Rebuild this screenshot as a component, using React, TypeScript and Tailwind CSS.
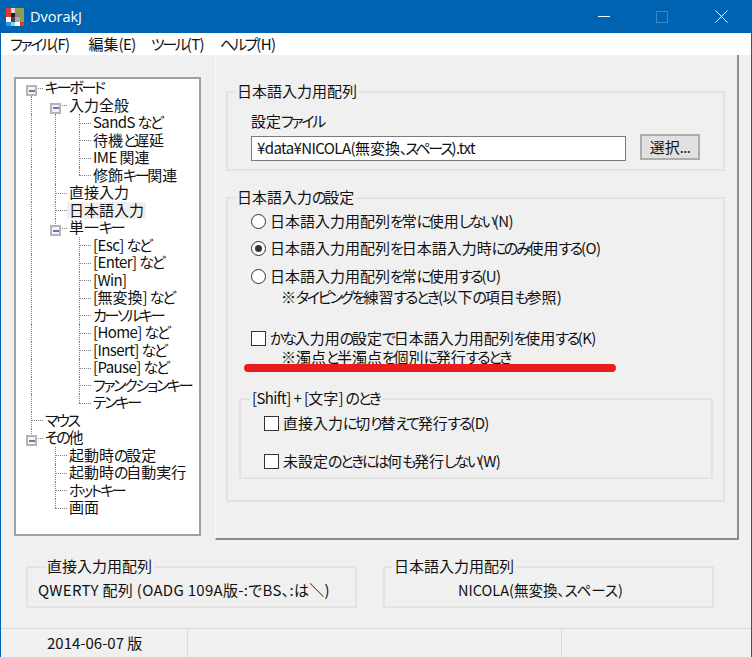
import React from 'react';

const treeRows: { label: string; guides: string; selected?: boolean }[] = [
  { label: 'キーボード', guides: 'D' },
  { label: '入力全般', guides: '|D' },
  { label: 'SandS など', guides: '||T' },
  { label: '待機と遅延', guides: '||T' },
  { label: 'IME 関連', guides: '||T' },
  { label: '修飾キー関連', guides: '||L' },
  { label: '直接入力', guides: '|T' },
  { label: '日本語入力', guides: '|T', selected: true },
  { label: '単一キー', guides: '|U' },
  { label: '[Esc] など', guides: '| T' },
  { label: '[Enter] など', guides: '| T' },
  { label: '[Win]', guides: '| T' },
  { label: '[無変換] など', guides: '| T' },
  { label: 'カーソルキー', guides: '| T' },
  { label: '[Home] など', guides: '| T' },
  { label: '[Insert] など', guides: '| T' },
  { label: '[Pause] など', guides: '| T' },
  { label: 'ファンクションキー', guides: '| T' },
  { label: 'テンキー', guides: '| L' },
  { label: 'マウス', guides: 'T' },
  { label: 'その他', guides: 'U' },
  { label: '起動時の設定', guides: ' T' },
  { label: '起動時の自動実行', guides: ' T' },
  { label: 'ホットキー', guides: ' T' },
  { label: '画面', guides: ' L' },
];

// kana and latin run narrower than kanji in the original UI font
const Jp = ({ text }: { text: string }) => (
  <>
    {text.split(/([ぁ-んァ-ヶー、]+|[\x20-\x7e¥]+)/).filter(Boolean).map((part, i) => {
      if (/^[ぁ-んァ-ヶー、]/.test(part)) return <span key={i} className="tracking-[-0.15em]">{part}</span>;
      if (/^[\x20-\x7e¥]/.test(part)) return <span key={i} className="tracking-[-0.04em]">{part}</span>;
      return <span key={i}>{part}</span>;
    })}
  </>
);

const GuideCell = ({ kind }: { kind: string }) => {
  const expander = kind === 'D' || kind === 'U';
  return (
    <div className="relative w-6 h-full shrink-0">
      {(kind === '|' || kind === 'T') && <span className="absolute left-3 top-0 bottom-0 border-l border-dotted border-[#808080]" />}
      {(kind === 'L' || kind === 'U') && <span className="absolute left-3 top-0 h-1/2 border-l border-dotted border-[#808080]" />}
      {kind === 'D' && <span className="absolute left-3 top-1/2 bottom-0 border-l border-dotted border-[#808080]" />}
      {(kind === 'T' || kind === 'L' || expander) && <span className="absolute left-3 w-3 top-1/2 border-t border-dotted border-[#808080]" />}
      {expander && (
        <span className="absolute left-[7px] top-[6px] w-[11px] h-[11px] flex items-center justify-center border-2 border-[#b4b4b4] bg-[#f4f4f4]">
          <span className="w-[6px] h-[2px] bg-[#6478b8]" />
        </span>
      )}
    </div>
  );
};

const GroupBox = ({ title, className, legendClass, children }: { title: string; className: string; legendClass?: string; children?: React.ReactNode }) => (
  <div className={`border-2 border-[#e3e3e3] ${className}`}>
    <div className={`-mt-[13px] h-[22px] w-fit bg-[#f0f0f0] leading-[22px] text-[15px] ${legendClass ?? 'ml-[7px] px-[2px]'}`}><Jp text={title} /></div>
    {children}
  </div>
);

const Radio = ({ checked, children }: { checked?: boolean; children: string }) => (
  <div className="flex items-center h-[20px]">
    <span className="w-[15px] h-[15px] rounded-full border border-[#333] bg-white flex items-center justify-center shrink-0">
      {checked && <span className="w-[7px] h-[7px] rounded-full bg-[#333]" />}
    </span>
    <span className="ml-[4px] text-[15px] whitespace-nowrap"><Jp text={children} /></span>
  </div>
);

const Check = ({ children }: { children: string }) => (
  <div className="flex items-center h-[20px]">
    <span className="w-[15px] h-[15px] border border-[#333] bg-white shrink-0" />
    <span className="ml-[4px] text-[15px] whitespace-nowrap"><Jp text={children} /></span>
  </div>
);

export default function App() {
  return (
    <div className="w-[752px] h-[657px] overflow-hidden flex flex-col bg-[#f0f0f0] border-x border-[#0063b1] text-[#111] font-['Noto_Sans_CJK_JP',sans-serif] [font-feature-settings:'palt']">
      {/* title bar */}
      <div className="h-[33px] shrink-0 bg-[#0063b1] flex items-center text-white -mx-px">
        <svg width="18" height="18" viewBox="0 0 4 4" className="ml-[6px]" shapeRendering="crispEdges">
          <rect width="4" height="4" fill="#fff" />
          <rect x="0" y="0" width="1" height="1" fill="#e03a30" />
          <rect x="1" y="0" width="1" height="1" fill="#d8d8d8" />
          <rect x="2" y="0" width="2" height="1" fill="#8ea04a" />
          <rect x="0" y="1" width="1" height="1" fill="#e03a30" />
          <rect x="1" y="1" width="1" height="1" fill="#222" />
          <rect x="2" y="1" width="1" height="1" fill="#888" />
          <rect x="3" y="1" width="1" height="1" fill="#8ea04a" />
          <rect x="1" y="2" width="1" height="1" fill="#444" />
          <rect x="2" y="2" width="1" height="1" fill="#aaa" />
          <rect x="3" y="2" width="1" height="1" fill="#8ea04a" />
          <rect x="0" y="3" width="1" height="1" fill="#2b9be0" />
          <rect x="1" y="3" width="1" height="1" fill="#8fd0f0" />
          <rect x="3" y="3" width="1" height="1" fill="#e03a30" />
        </svg>
        <span className="ml-[6px] text-[14.5px] font-['Open_Sans',sans-serif]">DvorakJ</span>
        <div className="ml-auto flex items-center">
          <span className="w-[12px] h-px bg-white mr-[46px]" />
          <span className="w-[12px] h-[12px] border border-[#3d86c6] mr-[47px]" />
          <svg width="13" height="13" viewBox="0 0 13 13" className="mr-[24px]" stroke="#fff" strokeWidth="1">
            <path d="M.5.5l12 12M12.5.5l-12 12" />
          </svg>
        </div>
      </div>

      {/* menu */}
      <div className="h-[22px] shrink-0 bg-white flex items-center pl-[9px] pt-[1px] text-[15px]">
        <span><Jp text="ファイル(F)" /></span>
        <span className="ml-[19px]"><Jp text="編集(E)" /></span>
        <span className="ml-[15px]"><Jp text="ツール(T)" /></span>
        <span className="ml-[16px]"><Jp text="ヘルプ(H)" /></span>
      </div>

      <div className="flex items-start h-[485px] shrink-0">
        {/* tree */}
        <div className="ml-[13px] mt-[22px] w-[187px] h-[459px] shrink-0 bg-white border-2 border-[#a0a0a0] pl-[3px]">
          {treeRows.map((row) => (
            <div key={row.label} className="flex h-[17.5px] items-center">
              {row.guides.split('').map((kind, i) => (
                <GuideCell key={i} kind={kind} />
              ))}
              <span className={`px-[2px] h-[17.5px] leading-[15.5px] text-[15px] whitespace-nowrap ${row.selected ? 'bg-[#f0f0f0]' : ''}`}><Jp text={row.label} /></span>
            </div>
          ))}
        </div>

        {/* settings panel */}
        <div className="ml-[14px] w-[524px] h-[485px] shrink-0 border-l border-l-[#fafafa] border-r-2 border-b-2 border-r-[#8c8c8c] border-b-[#8c8c8c] pl-[10px] pr-[12px] pt-[36px]">
          <GroupBox title="日本語入力用配列" className="h-[80px]">
            <div className="ml-[23px] mt-[9px] text-[15px] leading-[20px]"><Jp text="設定ファイル" /></div>
            <div className="flex items-start ml-[23px] mt-[-2px]">
              <div className="w-[375px] h-[25px] mt-[7px] bg-white border border-[#7a7a7a] pl-[5px] leading-[22px] text-[15px] whitespace-nowrap"><Jp text="¥data¥NICOLA(無変換、スペース).txt" /></div>
              <div className="ml-[14px] w-[60px] h-[26px] mt-[5px] bg-[#e1e1e1] border-2 border-[#adadad] flex items-center justify-center text-[15px]"><Jp text="選択..." /></div>
            </div>
          </GroupBox>

          <GroupBox title="日本語入力の設定" className="mt-[26px] h-[305px]">
            <div className="ml-[23px] mt-[3px] flex flex-col gap-[7.5px]">
              <Radio>日本語入力用配列を常に使用しない(N)</Radio>
              <Radio checked>日本語入力用配列を日本語入力時にのみ使用する(O)</Radio>
              <Radio>日本語入力用配列を常に使用する(U)</Radio>
            </div>
            <div className="ml-[53px] h-[20px] leading-[20px] text-[15px] mt-[1px]"><Jp text="※タイピングを練習するとき(以下の項目も参照)" /></div>
            <div className="ml-[23px] mt-[21px]"><Check>かな入力用の設定で日本語入力用配列を使用する(K)</Check></div>
            <div className="ml-[53px] h-[20px] leading-[20px] text-[15px] -mt-[1px]"><Jp text="※濁点と半濁点を個別に発行するとき" /></div>
            {/* red marker stroke */}
            <div className="ml-[16px] -mt-[3px] w-[372px] h-[8px] rounded-full bg-[#ea1c1c] relative" />
            <GroupBox title="[Shift] + [文字] のとき" className="ml-[11px] mt-[26px] w-[474px] h-[81px]" legendClass="ml-[9px] px-[2px]">
              <div className="ml-[23px] mt-[4px] flex flex-col gap-[18px]">
                <Check>直接入力に切り替えて発行する(D)</Check>
                <Check>未設定のときには何も発行しない(W)</Check>
              </div>
            </GroupBox>
          </GroupBox>
        </div>
      </div>

      {/* current layouts */}
      <div className="flex mt-[26px] ml-[25px] gap-[26px] shrink-0">
        <GroupBox title="直接入力用配列" className="w-[331px] h-[42px]" legendClass="ml-[17px] px-[2px]">
          <div className="pl-[10px] text-[15px] tracking-[0.3px] leading-[20px] mt-[3px] whitespace-nowrap">QWERTY 配列 (OADG 109A版-:でBS、:は＼)</div>
        </GroupBox>
        <GroupBox title="日本語入力用配列" className="w-[331px] h-[42px]" legendClass="ml-[7px] px-[2px]">
          <div className="pl-[73px] text-[14.5px] leading-[20px] mt-[3px] whitespace-nowrap">NICOLA(無変換、スペース)</div>
        </GroupBox>
      </div>

      {/* status bar */}
      <div className="mt-[20px] h-[29px] shrink-0 flex border-t border-[#d9d9d9] text-[15px]">
        <div className="w-[187px] border-r border-[#d9d9d9] pl-[46px] leading-[28px]">2014-06-07 版</div>
        <div className="w-[374px] border-r border-[#d9d9d9]" />
      </div>
    </div>
  );
}
